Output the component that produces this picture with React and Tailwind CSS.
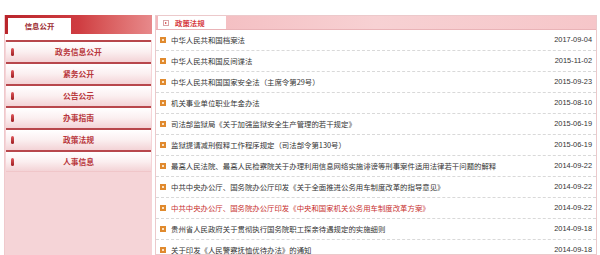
import React from 'react';

const menu = ['政务信息公开', '紧务公开', '公告公示', '办事指南', '政策法规', '人事信息'];

const rows = [
    { title: '中华人民共和国档案法', date: '2017-09-04' },
    { title: '中华人民共和国反间谍法', date: '2015-11-02' },
    { title: '中华人民共和国国家安全法（主席令第29号）', date: '2015-09-23' },
    { title: '机关事业单位职业年金办法', date: '2015-08-10' },
    { title: '司法部监狱局《关于加强监狱安全生产管理的若干规定》', date: '2015-06-19' },
    { title: '监狱提请减刑假释工作程序规定（司法部令第130号）', date: '2015-06-19' },
    { title: '最高人民法院、最高人民检察院关于办理利用信息网络实施诽谤等刑事案件适用法律若干问题的解释', date: '2014-09-22' },
    { title: '中共中央办公厅、国务院办公厅印发《关于全面推进公务用车制度改革的指导意见》', date: '2014-09-22' },
    { title: '中共中央办公厅、国务院办公厅印发《中央和国家机关公务用车制度改革方案》', date: '2014-09-22', hot: true },
    { title: '贵州省人民政府关于贯彻执行国务院职工探亲待遇规定的实施细则', date: '2014-09-18' },
    { title: '关于印发《人民警察抚恤优待办法》的通知', date: '2014-09-18' },
];

const cjk = { fontFamily: '"Noto Sans CJK SC", "Noto Sans", sans-serif' };

const App = () => {
    return (
        <div className="w-[600px] h-[255px] bg-white overflow-hidden pt-[15px] flex gap-[3px] pl-[4px]" style={cjk}>
            {/* Sidebar */}
            <aside className="w-[148px] flex flex-col bg-[#f5d4d7] border-l border-[#efc9cc]">
                <div className="h-[19px] flex items-end pl-[3px] bg-gradient-to-r from-[#b9252b] via-[#cf3c41] to-[#e7898b]">
                    <div className="w-[63px] h-[16px] bg-white flex items-center justify-center text-[7.4px] font-bold text-[#9b2a2f]">
                        信息公开
                    </div>
                </div>
                <div className="h-[6px] bg-white"></div>
                <nav className="flex flex-col px-[1px]">
                    {menu.map((item, i) => (
                        <div
                            key={item}
                            className={`h-[22px] flex items-center border-t-2 border-[#b8474c] bg-gradient-to-b from-white via-[#fbeff0] to-[#f3d3d6] ${i === menu.length - 1 ? 'border-b border-b-[#f0c6c9]' : ''}`}
                        >
                            <span className="ml-[5px] w-[3px] h-[8px] rounded-[2px] bg-gradient-to-b from-[#e0575c] to-[#9e1c22]"></span>
                            <span className="flex-1 text-center pr-[8px] text-[7.8px] font-bold text-[#b8373c]">{item}</span>
                        </div>
                    ))}
                </nav>
            </aside>

            {/* Main list */}
            <main className="flex-1 mr-[3px] border border-[#ecc9cb] flex flex-col">
                <div className="h-[15px] flex items-end pl-[2px] bg-gradient-to-r from-[#f3b8bc] via-[#f7d1d3] to-[#f6c6c9] border-b border-[#e9b3b7]">
                    <div className="w-[68px] h-[13px] bg-white flex items-center gap-[6px] pl-[5px]">
                        <span className="w-[6px] h-[6px] border border-[#d9a3a6] flex items-center justify-center">
                            <span className="w-0 h-0 border-y-[1.5px] border-y-transparent border-l-[2px] border-l-[#c33]"></span>
                        </span>
                        <span className="text-[7.4px] font-bold text-[#d6393f]">政策法规</span>
                    </div>
                </div>
                <ul className="flex flex-col">
                    {rows.map((row, i) => (
                        <li key={i} className="h-[21px] flex items-center pl-[4px] pr-[4px] border-b border-dashed border-[#d9d9d9]">
                            <span className="w-[6px] h-[6px] bg-[#e08a2e] flex items-center justify-center mr-[5px]">
                                <span className="w-[2px] h-[2px] bg-[#fbe2c4]"></span>
                            </span>
                            <span className={`flex-1 text-[7.4px] whitespace-nowrap ${row.hot ? 'text-[#c8312f]' : 'text-[#333]'}`}>{row.title}</span>
                            <span className="text-[7.4px] text-[#333]" style={{ fontFamily: '"Liberation Sans", sans-serif' }}>{row.date}</span>
                        </li>
                    ))}
                </ul>
            </main>
        </div>
    );
};

export default App;
